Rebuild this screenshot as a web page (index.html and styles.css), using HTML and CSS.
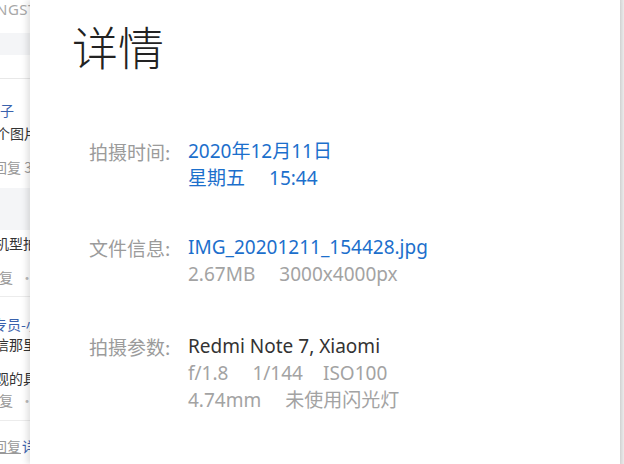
FILE: index.html
```html
<!DOCTYPE html>
<html lang="zh">
<head>
<meta charset="utf-8">
<link rel="stylesheet" href="styles.css">
</head>
<body>
<div class="screen">
  <div class="backdrop">
    <div class="bd-inner">
      <div class="bd-header">NGST</div>
      <div class="bd-band"></div>
      <div class="bd-tabs"></div>
      <div class="bd-item bd-item1">
        <div class="bd-title">帖子</div>
        <div class="bd-text">分享一个图片</div>
        <div class="bd-meta">回复 3</div>
      </div>
      <div class="bd-band bd-band2"></div>
      <div class="bd-item bd-item2">
        <div class="bd-text">手机型拍</div>
        <div class="bd-meta">回复<span class="dot">·</span></div>
      </div>
      <div class="bd-item bd-item3">
        <div class="bd-title">小米专员-小</div>
        <div class="bd-text">相信那里</div>
        <div class="bd-text">客观的具</div>
        <div class="bd-meta">回复<span class="dot">·</span></div>
      </div>
      <div class="bd-item bd-item4">
        <div class="bd-meta"><u>回复</u><span class="blue">详</span></div>
      </div>
    </div>
  </div>
  <div class="panel">
    <h1 class="title">详情</h1>
    <div class="info">
      <div class="row row-time">
        <div class="label">拍摄时间:</div>
        <div class="value">
          <div class="line link">2020年12月11日</div>
          <div class="line link"><span>星期五</span><span class="sep">15:44</span></div>
        </div>
      </div>
      <div class="row row-file">
        <div class="label">文件信息:</div>
        <div class="value">
          <div class="line link">IMG_20201211_154428.jpg</div>
          <div class="line muted"><span>2.67MB</span><span class="sep">3000x4000px</span></div>
        </div>
      </div>
      <div class="row row-params">
        <div class="label">拍摄参数:</div>
        <div class="value">
          <div class="line strong">Redmi Note 7, Xiaomi</div>
          <div class="line muted"><span>f/1.8</span><span class="sep">1/144</span><span class="sep sep-s">ISO100</span></div>
          <div class="line muted"><span>4.74mm</span><span class="sep">未使用闪光灯</span></div>
        </div>
      </div>
    </div>
  </div>
  <div class="edge"></div>
</div>
</body>
</html>
```
FILE: styles.css
```css
html, body {
  margin: 0;
  padding: 0;
  background: #fff;
}
.screen {
  display: flex;
  width: 624px;
  height: 464px;
  overflow: hidden;
}
.backdrop {
  width: 30px;
  flex: none;
  overflow: hidden;
  background: #fff;
  font-family: "Noto Sans CJK SC", "Noto Sans", sans-serif;
  font-size: 14px;
}
.bd-inner {
  width: 200px;
  margin-left: -28px;
}
.bd-header {
  height: 33px;
  color: #a8a8a8;
  font-family: "Noto Sans", sans-serif;
  font-size: 15px;
  line-height: 18px;
  letter-spacing: 0.5px;
  margin-left: 24px;
}
.bd-band {
  height: 22px;
  background: #f4f5f7;
}
.bd-band2 {
  height: 42px;
}
.bd-tabs {
  height: 23px;
  border-bottom: 1px solid #e8e8e8;
}
.bd-item {
  border-bottom: 1px solid #ececec;
  line-height: 20px;
  white-space: nowrap;
}
.bd-item1 {
  padding-top: 21px;
  height: 88px;
  border-bottom: none;
}
.bd-item1 .bd-title { margin-left: 14px; height: 23px; }
.bd-item1 .bd-text { margin-left: -18px; height: 34px; }
.bd-item1 .bd-meta { margin-left: 21px; }
.bd-title { color: #3a62ad; }
.bd-text { color: #333; }
.bd-meta { color: #999; }
.dot { margin-left: 7px; color: #bbb; }
.blue { color: #3a62ad; margin-left: 1px; }
.bd-item2 {
  padding-top: 3px;
  height: 63px;
}
.bd-item2 .bd-text { margin-left: 9px; height: 34px; }
.bd-item2 .bd-meta { margin-left: 13px; }
.bd-item3 {
  padding-top: 17px;
  height: 106px;
}
.bd-item3 .bd-title { margin-left: -7px; height: 20px; }
.bd-item3 .bd-text { margin-left: 9px; height: 34px; }
.bd-item3 .bd-text + .bd-text { height: 22px; }
.bd-item3 .bd-meta { margin-left: 13px; }
.bd-item4 {
  padding-top: 15px;
  border-bottom: none;
}
.bd-item4 .bd-meta { margin-left: 21px; }

.panel {
  flex: 1;
  background: #fff;
  box-shadow: -3px 0 6px rgba(0, 0, 0, 0.12);
  position: relative;
  font-family: "Noto Sans", "Noto Sans CJK SC", sans-serif;
  padding: 17px 0 0 42px;
}
.edge {
  width: 4px;
  flex: none;
  background: linear-gradient(to right, #d6d6d6, #ebebeb);
}
.title {
  margin: 0;
  font-family: "Noto Sans CJK SC", sans-serif;
  font-weight: 300;
  font-size: 46px;
  line-height: 56px;
  color: #222;
}
.info {
  margin-top: 65px;
  margin-left: 17px;
  display: flex;
  flex-direction: column;
  gap: 42px;
}
.row {
  display: grid;
  grid-template-columns: 99px auto;
  font-size: 19px;
  line-height: 27px;
}
.row-params { margin-top: 3px; }
.label {
  color: #9b9b9b;
  font-family: "Noto Sans CJK SC", sans-serif;
}
.link { color: #1c6fcc; }
.muted { color: #a3a3a3; }
.strong { color: #333; }
.sep { margin-left: 24px; }
.sep-s { margin-left: 20px; }
```
